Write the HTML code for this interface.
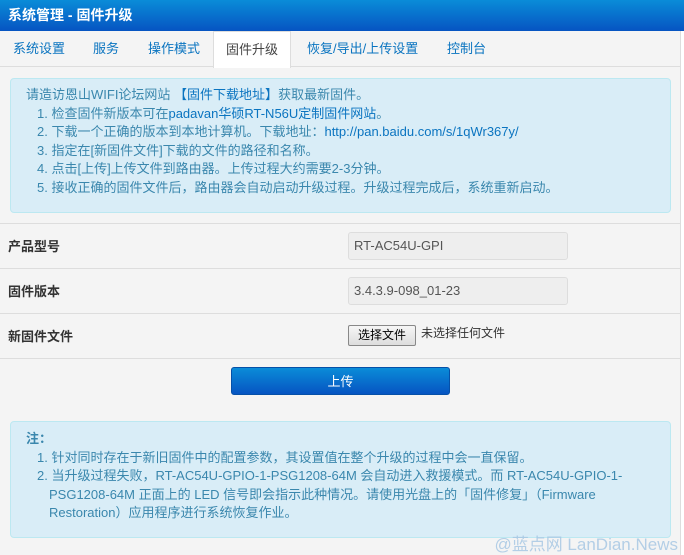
<!DOCTYPE html>
<html><head><meta charset="utf-8"><style>
*{margin:0;padding:0;box-sizing:border-box}
body{width:684px;height:555px;background:#f4f4f4;font-family:"Liberation Sans","Noto Sans CJK SC",sans-serif;font-size:12px;position:relative;overflow:hidden}
.title{position:absolute;left:0;top:0;width:684px;height:31px;background:linear-gradient(#0a8cd8,#0654c2);color:#fff;font-weight:bold;font-size:14px;line-height:31px;padding-left:8px}
.rb{position:absolute;right:0;top:31px;width:4px;height:524px;background:#fff;border-left:1px solid #ddd}
.tabs{position:absolute;left:0;top:31px;width:680px;height:36px;border-bottom:1px solid #ddd}
.tab{position:absolute;top:0;height:36px;line-height:36px;color:#0a74c0;font-size:13px}
.tab.act{background:#fff;border:1px solid #ddd;border-bottom:none;color:#444;height:37px;text-align:center}
.box{position:absolute;left:10px;width:661px;background:#d9edf7;border:1px solid #bce8f1;border-radius:4px;color:#3a87ad;line-height:18.5px;font-size:13px}
.box a{color:#0a74c0}
.hr{position:absolute;left:0;width:680px;height:1px;background:#ddd}
.lab{position:absolute;left:8px;font-weight:bold;font-size:13px;color:#333}
.inp{position:absolute;left:348px;width:220px;height:28px;background:#eee;border:1px solid #ddd;border-radius:3px;color:#555;font-size:13px;line-height:26px;padding-left:5px}
.btn{position:absolute;left:231px;top:367px;width:219px;height:28px;background:linear-gradient(#0a8cd8,#0654c2);border-radius:3px;color:#fff;text-align:center;line-height:28px;font-size:13px;border:1px solid #0550a8}
.wm{position:absolute;right:6px;top:530px;color:#a8c8e4;font-size:17px;opacity:.85}
</style></head><body>
<div class="title">系统管理 - 固件升级</div>
<div class="tabs">
<div class="tab" style="left:13px">系统设置</div>
<div class="tab" style="left:93px">服务</div>
<div class="tab" style="left:148px">操作模式</div>
<div class="tab act" style="left:213px;width:78px">固件升级</div>
<div class="tab" style="left:307px">恢复/导出/上传设置</div>
<div class="tab" style="left:447px">控制台</div>
</div>
<div class="rb"></div>
<div class="box" style="top:78px;height:135px;padding:7px 0 0 15px">
<div>请造访恩山WIFI论坛网站 <a>【固件下载地址】</a>获取最新固件。</div>
<div style="padding-left:11px">1. 检查固件新版本可在<a>padavan华硕RT-N56U定制固件网站</a>。</div>
<div style="padding-left:11px">2. 下载一个正确的版本到本地计算机。下载地址：<a>http://pan.baidu.com/s/1qWr367y/</a></div>
<div style="padding-left:11px">3. 指定在[新固件文件]下载的文件的路径和名称。</div>
<div style="padding-left:11px">4. 点击[上传]上传文件到路由器。上传过程大约需要2-3分钟。</div>
<div style="padding-left:11px">5. 接收正确的固件文件后，路由器会自动启动升级过程。升级过程完成后，系统重新启动。</div>
</div>
<div class="hr" style="top:223px"></div>
<div class="lab" style="top:236px">产品型号</div>
<div class="inp" style="top:232px">RT-AC54U-GPI</div>
<div class="hr" style="top:268px"></div>
<div class="lab" style="top:281px">固件版本</div>
<div class="inp" style="top:277px">3.4.3.9-098_01-23</div>
<div class="hr" style="top:313px"></div>
<div class="lab" style="top:326px">新固件文件</div>
<div style="position:absolute;left:348px;top:325px;width:68px;height:21px;border:1px solid #888;background:linear-gradient(#f6f6f6,#ddd);border-radius:2px;font-size:12px;line-height:19px;text-align:center;color:#000">选择文件</div>
<div style="position:absolute;left:421px;top:324px;font-size:12px;color:#333">未选择任何文件</div>
<div class="hr" style="top:358px"></div>
<div class="btn">上传</div>
<div class="box" style="top:421px;height:117px;padding:8px 0 0 15px">
<div style="font-weight:bold">注：</div>
<div style="padding-left:11px">1. 针对同时存在于新旧固件中的配置参数，其设置值在整个升级的过程中会一直保留。</div>
<div style="padding-left:23px;text-indent:-12px;padding-right:30px">2. 当升级过程失败，RT-AC54U-GPIO-1-PSG1208-64M 会自动进入救援模式。而 RT-AC54U-GPIO-1-PSG1208-64M 正面上的 LED 信号即会指示此种情况。请使用光盘上的「固件修复」（Firmware Restoration）应用程序进行系统恢复作业。</div>
</div>
<div class="wm">@蓝点网 LanDian.News</div>
</body></html>
